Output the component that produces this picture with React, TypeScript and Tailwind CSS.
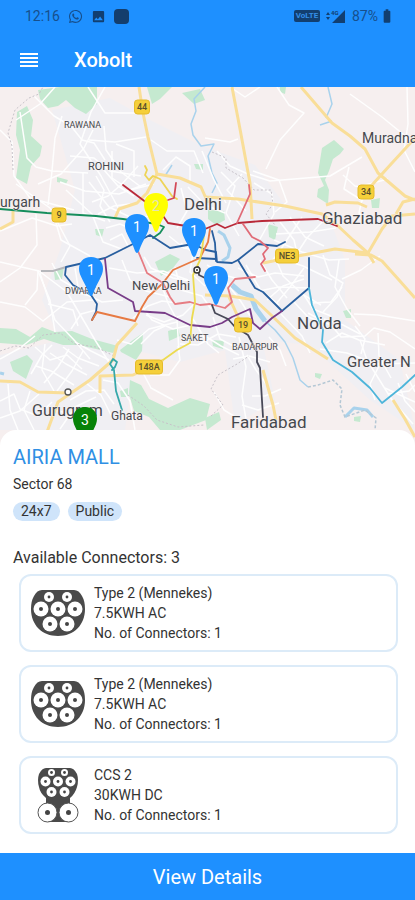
import { FaWhatsapp } from "react-icons/fa";
import { MdImage, MdBatteryFull } from "react-icons/md";

const MAP_TOP = 87;
const MAP_WIDTH = 415;
const MAP_HEIGHT = 359;

const parks = [
  "M38 90 L60 87 L97 87 L97 104 L86 114 L75 108 L66 100 L58 106 L48 108 L40 99Z",
  "M17 112 L27 106 L33 120 L31 136 L42 146 L40 156 L31 166 L27 184 L16 178 L20 150 L16 135Z",
  "M147 87 L172 87 L160 99 L152 104Z",
  "M182 93 L200 89 L205 100 L194 104Z",
  "M57 177 L68 180 L66 184 L57 182Z",
  "M95 229 L104 229 L102 237 L96 235Z",
  "M194 164 L203 164 L203 170 L196 169Z",
  "M280 87 L286 87 L285 94 L280 92Z",
  "M322 148 L334 140 L344 149 L340 154 L333 159 L329 171 L325 180 L329 190 L328 204 L317 197 L318 189 L324 186 L318 173Z",
  "M371 200 L380 198 L379 208 L372 208Z",
  "M208 210 L224 211 L225 220 L216 225 L208 219Z",
  "M268 224 L278 227 L275 240 L269 237Z",
  "M155 262 L170 254 L180 259 L173 268 L161 276Z",
  "M0 328 L16 329 L30 337 L42 327 L55 332 L72 331 L92 339 L118 346 L113 353 L96 349 L78 345 L63 345 L44 339 L26 345 L0 343Z",
  "M10 362 L27 355 L33 361 L26 379 L13 371Z",
  "M120 350 L133 340 L143 333 L142 351 L136 360 L121 352Z",
  "M168 331 L178 328 L180 336 L169 341Z",
  "M130 380 L141 385 L149 399 L168 408 L190 398 L210 404 L206 420 L180 430 L160 430 L149 417 L134 411 L129 394Z",
  "M120 391 L128 388 L128 397 L121 397Z",
  "M343 311 L351 309 L351 318 L346 318Z",
  "M212 340 L224 341 L223 349 L213 346Z",
  "M315 373 L322 374 L320 379 L315 377Z",
  "M205 418 L219 412 L221 420 L207 430Z",
  "M354 417 L361 416 L360 422 L354 421Z",
  "M54 272 L64 267 L62 279 L55 280Z",
];

const streets = [
  "M0 262 L39 271 L67 292 L95 340 L117 375",
  "M0 130 L12 142 L14 176 L30 198 L74 210",
  "M20 112 L27 158 L36 167 L52 171 L88 173",
  "M34 96 L54 116 L71 126 L82 140 L94 143 L105 160",
  "M55 87 L40 104 L16 120",
  "M62 116 L55 138 L52 171 L48 205",
  "M16 184 L50 208 L70 246 L61 262",
  "M88 87 L105 113 L139 113",
  "M105 87 L91 112 L80 144 L101 176 L121 213",
  "M89 140 L115 142 L146 137",
  "M104 126 L106 150 L121 172 L141 187",
  "M70 156 L94 158 L110 171 L141 176",
  "M60 182 L85 191 L119 194 L146 184",
  "M83 173 L83 213 L105 221",
  "M66 190 L92 214 L103 242 L124 250",
  "M89 182 L109 207 L132 218 L151 216",
  "M112 151 L112 178 L130 190 L154 184",
  "M116 144 L134 151 L134 177",
  "M96 176 L104 190 L100 206 L110 222",
  "M104 170 L118 186 L134 196",
  "M92 202 L108 196 L122 184 L138 166",
  "M98 214 L114 206 L130 204",
  "M106 228 L120 224 L134 230 L148 228",
  "M110 240 L122 234 L128 246",
  "M38 184 L61 174 L84 148 L93 130",
  "M36 214 L37 245 L20 268 L0 282",
  "M0 231 L32 218 L57 226 L72 224",
  "M53 213 L61 240 L90 256",
  "M151 140 L167 151 L194 151 L203 173",
  "M163 170 L176 157 L190 166 L190 183",
  "M202 151 L214 180 L226 203",
  "M181 188 L187 211 L177 228",
  "M188 187 L205 205 L225 213",
  "M205 138 L230 142 L238 139",
  "M217 151 L230 166 L248 174 L270 181 L330 176 L362 157",
  "M230 87 L245 97 L260 87",
  "M277 87 L289 105 L304 113 L280 140 L266 169",
  "M350 94 L382 117 L415 144",
  "M407 87 L408 124 L404 150 L415 172",
  "M253 171 L279 180 L287 202 L275 212",
  "M254 183 L272 194 L274 214 L260 239",
  "M221 172 L235 186 L226 213 L239 236",
  "M242 174 L227 190 L246 211",
  "M343 175 L355 186 L375 190",
  "M349 167 L344 189 L363 201",
  "M388 179 L365 185 L359 213 L368 224",
  "M276 234 L310 232 L336 228",
  "M280 222 L294 240 L298 257",
  "M290 217 L305 237 L324 246",
  "M302 217 L281 249 L272 261",
  "M324 220 L307 238 L294 258",
  "M274 240 L302 252 L329 260 L349 259",
  "M0 302 L25 307 L43 321 L67 302 L93 300",
  "M38 271 L37 290 L25 305",
  "M38 271 L50 300 L55 332",
  "M52 263 L61 280 L86 294 L102 302 L123 300",
  "M40 273 L55 320 L75 341 L90 359",
  "M75 268 L79 293 L91 296",
  "M48 304 L73 310 L78 326",
  "M71 329 L81 314 L96 310",
  "M35 347 L50 360 L67 355 L82 369",
  "M45 344 L42 370 L54 391",
  "M0 359 L20 348 L35 336",
  "M31 374 L42 355 L52 345",
  "M44 383 L58 367 L69 349",
  "M57 391 L72 371 L83 351",
  "M36 366 L51 371 L74 385",
  "M50 353 L66 364 L87 375",
  "M63 347 L78 358 L99 366",
  "M75 342 L91 351 L109 360",
  "M70 400 L86 391 L104 390 L114 404",
  "M86 383 L101 395 L113 419",
  "M103 380 L118 383 L130 401 L135 430",
  "M0 401 L14 394 L20 409 L38 416 L52 402",
  "M8 384 L10 410 L18 430",
  "M30 391 L24 410 L34 430",
  "M0 418 L20 411 L39 394",
  "M55 410 L70 414 L88 408",
  "M60 429 L75 407 L96 397",
  "M109 268 L137 273 L163 271 L188 280",
  "M122 260 L130 280 L146 291 L170 297",
  "M144 257 L151 268 L173 278 L190 281",
  "M133 318 L148 306 L162 301 L177 303",
  "M143 308 L152 320 L173 329 L191 325",
  "M146 315 L164 322 L183 315 L194 304",
  "M160 281 L168 303 L177 320 L179 352",
  "M141 344 L154 331 L165 326",
  "M117 340 L131 344 L149 329 L177 322",
  "M180 344 L198 345 L218 334 L236 337",
  "M205 336 L221 346 L239 355",
  "M193 319 L208 344 L219 353",
  "M213 317 L220 339 L241 350",
  "M175 267 L181 290 L202 296 L211 309",
  "M181 243 L193 253 L190 272 L205 286",
  "M169 236 L184 248 L199 250",
  "M207 265 L224 275 L239 279",
  "M222 268 L228 285 L240 300 L250 316",
  "M238 268 L258 277 L275 273 L304 276",
  "M246 265 L260 289 L279 305",
  "M260 260 L272 280 L287 298",
  "M275 257 L283 276 L299 291",
  "M259 291 L279 287 L309 288",
  "M267 300 L283 286 L304 279",
  "M275 305 L290 287 L304 268",
  "M284 310 L302 294 L321 305",
  "M282 259 L303 266 L332 280",
  "M323 255 L330 275 L343 283 L337 297 L323 312",
  "M339 260 L335 287 L347 309 L360 326",
  "M342 279 L361 270 L380 256",
  "M355 326 L365 339 L361 354",
  "M354 314 L378 315 L415 321",
  "M312 303 L331 302 L342 287",
  "M308 313 L332 326 L341 337 L365 336 L374 328 L390 332 L415 349",
  "M281 314 L302 336 L310 353",
  "M294 302 L308 317 L324 323",
  "M304 295 L313 309 L331 316",
  "M324 319 L343 325 L360 334",
  "M326 343 L342 333 L359 340 L385 345",
  "M320 349 L347 353 L377 364 L415 363",
  "M360 340 L367 360 L392 400 L413 424",
  "M378 333 L379 356 L391 378",
  "M382 360 L370 384 L375 400",
  "M385 388 L415 402",
  "M388 394 L409 391 L415 385",
  "M398 383 L405 401 L415 412",
  "M406 374 L415 392",
  "M269 337 L280 350 L286 366",
  "M233 359 L249 356 L270 362",
  "M239 337 L246 367 L242 396 L247 425",
  "M247 355 L256 370 L267 385",
  "M252 396 L265 396 L281 389",
  "M242 405 L258 410 L279 403",
  "M214 392 L224 410 L242 421",
  "M150 375 L169 375 L180 360 L178 346",
  "M141 369 L151 388 L173 400",
];

const highways = [
  "M139 87 L143 113 L148 137 L157 174 L180 178 L201 187 L208 203",
  "M157 174 L147 193 L137 203 L119 209 L115 218",
  "M232 87 L240 129 L250 183 L252 219",
  "M301 87 L332 123 L350 136 L365 149 L378 173 L405 196 L415 200",
  "M415 138 L392 163 L372 185",
  "M205 197 L238 199 L285 206 L322 214 L338 226 L353 240 L368 253 L374 263",
  "M415 214 L392 216 L382 229 L368 253 L335 249 L298 256 L263 263",
  "M326 205 L335 202 L358 203 L367 207",
  "M415 199 L403 202 L396 214",
  "M355 254 L371 255 L382 261 L399 280 L415 298",
  "M205 295 L230 296 L255 300 L270 314 L295 338 L328 359",
  "M229 297 L238 317 L246 329",
  "M263 370 L273 405 L276 420",
  "M393 400 L405 419 L415 437",
  "M137 323 L117 345 L113 360 L90 380 L58 402 L47 432",
  "M0 381 L20 382 L38 392 L68 393",
  "M163 360 L150 367 L133 375 L100 376 L100 393",
  "M0 229 L13 222 L13 210",
];

const metroLines = [
  { color: "#eed457", d: "M145 166 L147 170 L145 175 L149 180 L153 176 L160 179 L172 196 L177 199" },
  { color: "#d34957", d: "M176 183 L174 198 L168 200" },
  { color: "#168e5c", d: "M0 209 L47 213 L96 216 L123 219 L157 224 L164 227 L160 233 L153 238" },
  { color: "#b92938", d: "M123 185 L147 203 L161 213 L168 223 L180 225 L205 229 L217 224 L225 228 L238 223 L262 221 L318 219 L337 226" },
  { color: "#295f9f", d: "M92 320 L96 312 L97 304 L91 295 L73 285 L65 275 L66 267 L105 258 L133 244 L150 235 L170 248 L193 244 L206 250 L216 252 L217 262 L232 263 L238 260 L258 244 L277 246 L285 242" },
  { color: "#295f9f", d: "M197 258 L216 259 M212 231 L215 243 L216 261 M238 260 L255 288 L263 292 L282 311 L309 288 L309 258" },
  { color: "#783c88", d: "M105 259 L108 288 L133 302 L135 311 L165 313 L190 325 L210 327 L222 323 L232 317 L250 309 L253 323 L260 329 L272 318 L282 311" },
  { color: "#e77a43", d: "M92 320 L97 312 L135 321 L142 307 L148 297 L163 283 L173 270 L200 258 L208 242 L210 229" },
  { color: "#e67c83", d: "M138 251 L143 263 L147 273 L163 283 L170 297 L175 304 L190 302 L200 305 L210 304 L225 308 L232 302 L228 288 L235 279 L255 277" },
  { color: "#e06b77", d: "M249 185 L250 194 L237 223 M243 224 L252 237 L260 241 L268 248 L263 254 L265 259 L261 264 L265 271" },
  { color: "#ecdb51", d: "M205 228 L202 250 L200 260 L193 275 L195 302 L192 318 L190 343 L177 350 L163 360" },
  { color: "#4db5da", d: "M309 288 L312 305 L323 330 L322 342 L333 360 L352 372 L370 388 L382 403 L402 387 L415 375" },
  { color: "#37a8aa", d: "M122 410 L116 391 L114 370 L110 364 L113 359 L117 362 L115 367 L112 370" },
  { color: "#484958", d: "M198 267 L199 275 L205 278 M212 305 L215 313 L228 319 L235 327 L248 335 L257 352 L257 362 L260 368 L263 417" },
];

const borders = [
  "M13 170 L12 146 L8 133 L15 110 L29 98 L39 94 L43 87",
  "M212 152 L226 158 L226 168 L243 178 L254 190 L271 190 L273 204 L266 214 L275 225",
  "M0 351 L15 346 L29 348 L43 335 L60 333 L75 344 L96 347 L114 356",
  "M211 416 L223 405 L211 389 L218 375 L237 364 L249 356",
  "M128 395 L144 406 L157 420 L178 427 L204 425",
];

const shields = [
  { x: 142, y: 107, w: 15, text: "44" },
  { x: 366, y: 192, w: 16, text: "34" },
  { x: 59, y: 215, w: 14, text: "9" },
  { x: 287, y: 256, w: 23, text: "NE3" },
  { x: 243, y: 325, w: 17, text: "19" },
  { x: 149, y: 367, w: 27, text: "148A" },
];

const places = [
  { x: 64, y: 128, size: 9, text: "RAWANA" },
  { x: 88, y: 170, size: 11, text: "ROHINI" },
  { x: 0, y: 207, size: 14, text: "urgarh" },
  { x: 184, y: 210, size: 17, text: "Delhi" },
  { x: 362, y: 143, size: 14, text: "Muradna" },
  { x: 322, y: 224, size: 17, text: "Ghaziabad" },
  { x: 132, y: 290, size: 13, text: "New Delhi" },
  { x: 65, y: 294, size: 9, text: "DWARKA" },
  { x: 181, y: 341, size: 9, text: "SAKET" },
  { x: 232, y: 350, size: 9, text: "BADARPUR" },
  { x: 297, y: 329, size: 17, text: "Noida" },
  { x: 347, y: 367, size: 15, text: "Greater N" },
  { x: 32, y: 416, size: 16, text: "Gurugram" },
  { x: 111, y: 420, size: 12, text: "Ghata" },
  { x: 231, y: 428, size: 17, text: "Faridabad" },
];

// x and y are the tip of each pin
const pins = [
  { x: 156, y: 233, count: 2, color: "text-[#ffff00]", label: "text-[#e4e4b0]" },
  { x: 137, y: 254, count: 1, color: "text-[#1e90ff]", label: "text-white" },
  { x: 194, y: 258, count: 1, color: "text-[#1e90ff]", label: "text-white" },
  { x: 91, y: 297, count: 1, color: "text-[#1e90ff]", label: "text-white" },
  { x: 216, y: 306, count: 1, color: "text-[#1e90ff]", label: "text-white" },
  { x: 85, y: 447, count: 3, color: "text-[#078207]", label: "text-white" },
];

const connectors = [
  { name: "Type 2 (Mennekes)", power: "7.5KWH AC", count: 1, kind: "type2" },
  { name: "Type 2 (Mennekes)", power: "7.5KWH AC", count: 1, kind: "type2" },
  { name: "CCS 2", power: "30KWH DC", count: 1, kind: "ccs2" },
];

const StatusBar = () => (
  <div className="flex h-8 items-center justify-between pl-[25px] pr-5 text-sm text-[#174f8c]">
    <div className="flex items-center gap-2">
      <span>12:16</span>
      <FaWhatsapp className="size-[15px]" />
      <MdImage className="size-[15px] text-[#123f70]" />
      <span className="size-[15px] rounded-sm bg-[#143e6d]" />
    </div>
    <div className="flex items-center gap-[6px]">
      <span className="flex h-3 w-[26px] items-center justify-center rounded-xs bg-[#123f70] text-[8px] font-bold text-[#348fe7]">
        VoLTE
      </span>
      <svg viewBox="0 0 20 15" className="h-[15px] w-5" fill="#123f70">
        <path d="M0 6 L2 3 L4 6Z M0 8 L4 8 L2 11Z M6 14 L19 1 L19 14Z" />
        <text x="5" y="6" fontSize="6" fontWeight="700">4G</text>
      </svg>
      <span className="flex items-center gap-px">
        87%
        <MdBatteryFull className="size-4 text-[#123f70]" />
      </span>
    </div>
  </div>
);

const AppBar = () => (
  <div className="flex h-[55px] items-center gap-9 px-5">
    <button type="button" aria-label="Open menu" className="text-white">
      <svg viewBox="0 0 18 14" className="h-[14px] w-[18px]" fill="currentColor">
        <path d="M0 0h18v2H0z M0 4h18v2H0z M0 8h18v2H0z M0 12h18v2H0z" />
      </svg>
    </button>
    <h1 className="text-xl font-medium text-white">Xobolt</h1>
  </div>
);

const CityMap = () => (
  <section aria-label="Charging stations" className="relative overflow-hidden">
    <svg viewBox={`0 ${MAP_TOP} ${MAP_WIDTH} ${MAP_HEIGHT}`} className="block h-auto w-full">
      <rect x="0" y={MAP_TOP} width={MAP_WIDTH} height={MAP_HEIGHT} fill="#f6efef" />
      <path
        d="M52 110 L110 98 L150 120 L200 145 L255 165 L285 205 L330 220 L345 260 L345 320 L400 360 L415 430 L370 400 L310 345 L262 340 L275 400 L235 425 L225 350 L180 362 L135 350 L125 430 L0 430 L0 355 L60 340 L42 300 L60 250 L75 190Z"
        fill="#f0eff3"
      />
      {parks.map((d) => (
        <path key={d} d={d} fill="#c5e9d0" />
      ))}
      <g fill="none" stroke="#a9d2ec" strokeWidth="1.5" strokeLinejoin="round">
        <path d="M205 87 L194 99 L196 111 L191 124 L193 135 L201 146 L214 144 L208 156 L212 173 L217 183 L212 193" />
        <path d="M328 87 L332 104 L326 118 M332 121 L320 125 M165 176 L172 165" />
        <path d="M218 231 L224 235 L230 248 L228 257 L222 261" strokeWidth="3" />
        <path d="M0 373 L4 374" strokeWidth="3" />
        <path d="M232 285 L240 292 L251 296 L256 309 L265 321" strokeWidth="5" />
        <path d="M265 321 L275 330 L285 342 L293 358 L300 380 L308 387" />
        <path d="M345 417 L354 408 L367 410 L373 417" strokeWidth="3" />
      </g>
      <path
        d="M308 387 L318 385 L333 380 L342 389 L340 405 L345 417 L365 410 L376 418 L375 430"
        fill="none"
        stroke="#b5c8d5"
        strokeWidth="1.5"
        strokeDasharray="3 2"
      />
      {streets.map((d) => (
        <path key={d} d={d} fill="none" stroke="#fefefe" strokeWidth="1.5" strokeLinejoin="round" />
      ))}
      {borders.map((d) => (
        <path key={d} d={d} fill="none" stroke="#c7c2c9" strokeWidth="1" strokeDasharray="2 2" />
      ))}
      {highways.map((d) => (
        <path key={d} d={d} fill="none" stroke="#f9de98" strokeWidth="3" strokeLinejoin="round" />
      ))}
      <path d="M41 271 L53 271 L66 267" fill="none" stroke="#b6b7bb" strokeWidth="2" />
      {metroLines.map(({ color, d }) => (
        <path key={d} d={d} fill="none" stroke={color} strokeWidth="1.8" strokeLinejoin="round" strokeLinecap="round" />
      ))}
      <circle cx="197" cy="270" r="3" fill="#fff" stroke="#333" strokeWidth="1.5" />
      <circle cx="197" cy="270" r="1" fill="#333" />
      <circle cx="68" cy="392" r="3" fill="#fff" stroke="#555" strokeWidth="1.3" />
      {shields.map(({ x, y, w, text }) => (
        <g key={text}>
          <rect x={x - w / 2} y={y - 7} width={w} height="14" rx="3" fill="#f5cf3a" stroke="#e5bb2b" strokeWidth="1" />
          <text x={x} y={y + 3} textAnchor="middle" fontSize="9" fontWeight="500" fill="#59502c">
            {text}
          </text>
        </g>
      ))}
      <g fill="#46484d" stroke="#f7f3f4" strokeWidth="1" paintOrder="stroke" strokeLinejoin="round">
        {places.map(({ x, y, size, text }) => (
          <text key={text} x={x} y={y} fontSize={size}>
            {text}
          </text>
        ))}
      </g>
    </svg>
    {pins.map(({ x, y, count, color, label }) => (
      <button
        key={`${x}-${y}`}
        type="button"
        aria-label={`${count} stations`}
        className={`absolute h-10 w-[26px] -translate-x-1/2 -translate-y-full ${color}`}
        style={{
          left: `${(x / MAP_WIDTH) * 100}%`,
          top: `${((y - MAP_TOP) / MAP_HEIGHT) * 100}%`,
        }}
      >
        <svg viewBox="0 0 26 40" className="absolute inset-0 size-full" fill="currentColor">
          <path d="M13 0 C5 0 1 5 1 12 C1 19 7 25 11 37 Q13 41 15 37 C19 25 25 19 25 12 C25 5 21 0 13 0Z" />
        </svg>
        <span className={`absolute inset-x-0 top-[3px] text-center text-sm leading-5 ${label}`}>{count}</span>
      </button>
    ))}
  </section>
);

const Socket = ({ cx, cy, r }: { cx: number; cy: number; r: number }) => (
  <>
    <circle cx={cx} cy={cy} r={r} fill="#fff" />
    <circle cx={cx} cy={cy} r={r > 5 ? 2 : 1.4} fill="#444" />
  </>
);

const Type2Icon = () => (
  <svg viewBox="0 0 56 48" className="h-12 w-14">
    <path d="M12 1 H44 Q49 1 52 7 Q55 12 55 20 C55 36 44 47 28 47 C12 47 1 36 1 20 Q1 12 4 7 Q7 1 12 1Z" fill="#4a4a4a" />
    <Socket cx={19} cy={8} r={5} />
    <Socket cx={37} cy={8} r={5} />
    <Socket cx={11} cy={20} r={7.5} />
    <Socket cx={28} cy={20} r={7.5} />
    <Socket cx={45} cy={20} r={7.5} />
    <Socket cx={20} cy={35} r={7.5} />
    <Socket cx={37} cy={35} r={7.5} />
  </svg>
);

const Ccs2Icon = () => (
  <svg viewBox="0 0 42 56" className="h-14 w-[42px]">
    <path d="M9 1 H33 Q37 1 40 7 Q42 13 40 20 Q38 27 33 31 V37 H32 V55 H10 V37 H9 V31 Q3 26 2 20 Q0 13 2 7 Q5 1 9 1Z" fill="#4a4a4a" />
    <Socket cx={14.5} cy={5.5} r={3.5} />
    <Socket cx={27.5} cy={5.5} r={3.5} />
    <Socket cx={8.5} cy={14.5} r={5} />
    <Socket cx={21} cy={14.5} r={5} />
    <Socket cx={33.5} cy={14.5} r={5} />
    <Socket cx={14.5} cy={25} r={5} />
    <Socket cx={27.5} cy={25} r={5} />
    <g stroke="#555" strokeWidth="1">
      <circle cx="10.5" cy="45.5" r="9.5" fill="#fff" />
      <circle cx="31.5" cy="45.5" r="9.5" fill="#fff" />
    </g>
    <circle cx="10.5" cy="45.5" r="2.5" fill="#444" />
    <circle cx="31.5" cy="45.5" r="2.5" fill="#444" />
  </svg>
);

const StationSheet = () => (
  <section className="relative -mt-4 flex-1 rounded-t-2xl bg-white px-[13px] pt-[13px] pb-[18px] text-[#333]">
    <h2 className="text-xl leading-7 text-[#2f8fe4]">AIRIA MALL</h2>
    <p className="mt-[3px] text-sm leading-5">Sector 68</p>
    <div className="mt-2 flex gap-2">
      {["24x7", "Public"].map((tag) => (
        <span key={tag} className="rounded-full bg-[#cfe4fa] px-2 text-sm leading-[19px]">
          {tag}
        </span>
      ))}
    </div>
    <h3 className="mt-[25px] text-base leading-6">Available Connectors: 3</h3>
    <ul className="ml-[6px] mr-1 mt-1 flex flex-col gap-[13px]">
      {connectors.map(({ name, power, count, kind }, i) => (
        <li key={i} className="flex h-[78px] items-center gap-2 rounded-xl border-2 border-[#dcebf8] pl-[9px]">
          <span className="flex w-14 justify-center">{kind === "type2" ? <Type2Icon /> : <Ccs2Icon />}</span>
          <div className="text-sm leading-5">
            <p>{name}</p>
            <p>{power}</p>
            <p>No. of Connectors: {count}</p>
          </div>
        </li>
      ))}
    </ul>
  </section>
);

const App = () => (
  <main className="flex min-h-screen flex-col bg-white font-[Roboto,sans-serif]">
    <header className="bg-[#1e90ff]">
      <StatusBar />
      <AppBar />
    </header>
    <CityMap />
    <StationSheet />
    <button type="button" className="h-[47px] bg-[#1e90ff] text-xl text-white">
      View Details
    </button>
  </main>
);

export default App;
